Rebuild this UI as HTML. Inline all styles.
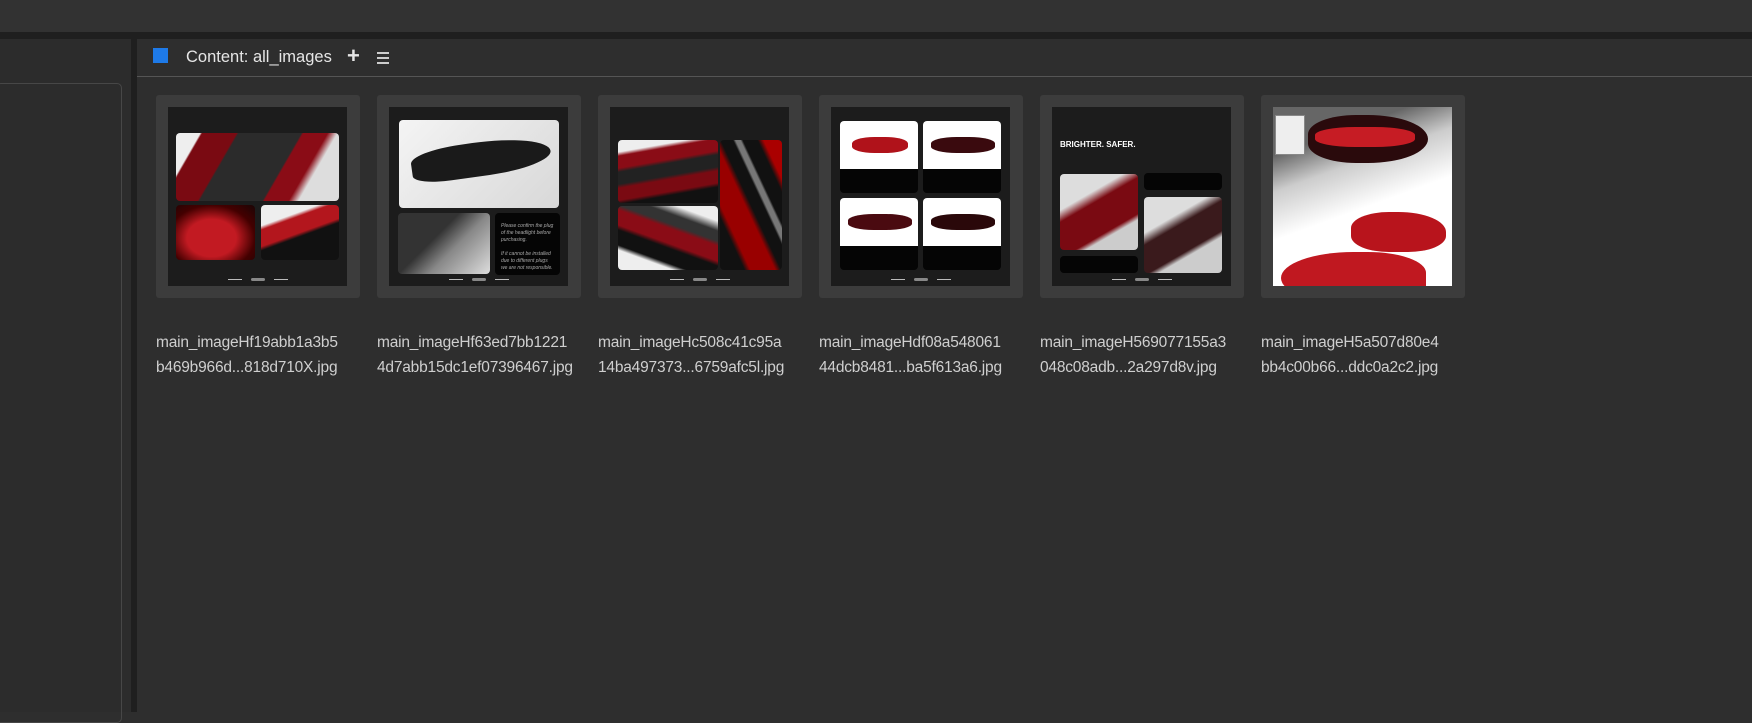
<!DOCTYPE html>
<html><head><meta charset="utf-8">
<style>
*{margin:0;padding:0;box-sizing:border-box}
body{width:1752px;height:712px;background:#2e2e2e;font-family:"Liberation Sans",sans-serif;position:relative;overflow:hidden}
.a{position:absolute}
.tile{position:absolute;top:95px;width:204px;height:203px;background:#3c3c3c;border-radius:3px}
.img{position:absolute;left:12px;top:12px;width:179px;height:179px;background:#1c1c1c;overflow:hidden}
.p{position:absolute;border-radius:4px;overflow:hidden}
.fn{position:absolute;top:330px;width:215px;color:#cfcfcf;font-size:15.5px;line-height:25px;white-space:nowrap;letter-spacing:-0.2px}
.foot{position:absolute;left:60px;top:171px;width:60px;height:4px}
.foot:before{content:"";position:absolute;left:0;top:1px;width:14px;height:1px;background:#bbb;box-shadow:46px 0 0 #bbb}
.foot:after{content:"";position:absolute;left:23px;top:0;width:14px;height:3px;background:#888;border-radius:2px}
.w{background:linear-gradient(135deg,#f4f4f4,#d8d8d8)}
.k{background:#050505}
</style></head><body>
<div class="a" style="left:0;top:0;width:1752px;height:32px;background:#323232"></div>
<div class="a" style="left:0;top:32px;width:1752px;height:7px;background:#1f1f1f"></div>
<div class="a" style="left:0;top:39px;width:131px;height:673px;background:#2c2c2c"></div>
<div class="a" style="left:-4px;top:83px;width:126px;height:640px;border:1px solid #474747;border-radius:5px"></div>
<div class="a" style="left:131px;top:39px;width:6px;height:673px;background:#1f1f1f"></div>
<div class="a" style="left:137px;top:76px;width:1615px;height:1px;background:#555"></div>
<div class="a" style="left:153px;top:48px;width:15px;height:15px;background:#1e7ae8"></div>
<div class="a" style="left:186px;top:47px;color:#e6e6e6;font-size:16.5px;line-height:20px">Content: all_images</div>
<div class="a" style="left:347px;top:44px;color:#e6e6e6;font-size:22px;font-weight:bold;line-height:24px">+</div>
<div class="a" style="left:377px;top:52px;width:12px;height:2px;background:#ccc;box-shadow:0 5px 0 #ccc,0 10px 0 #ccc"></div>

<!-- tile 1 -->
<div class="tile" style="left:156px"><div class="img">
<div class="p" style="left:8px;top:26px;width:163px;height:68px;background:linear-gradient(120deg,#eee 0 12%,#7a0a12 13% 30%,#2b2b2b 31% 62%,#8a0c16 63% 75%,#ddd 80%)"></div>
<div class="p" style="left:8px;top:98px;width:79px;height:55px;background:radial-gradient(ellipse at 45% 60%,#c21a22 0 40%,#400 70%,#1a0505)"></div>
<div class="p" style="left:93px;top:98px;width:78px;height:55px;background:linear-gradient(160deg,#eee 0 25%,#b3161d 30% 50%,#111 55%)"></div>
<div class="foot"></div></div></div>
<div class="fn" style="left:156px">main_imageHf19abb1a3b5<br>b469b966d...818d710X.jpg</div>

<!-- tile 2 -->
<div class="tile" style="left:377px"><div class="img">
<div class="p w" style="left:10px;top:13px;width:160px;height:88px"><div class="a" style="left:12px;top:22px;width:140px;height:34px;background:#1a1a1a;border-radius:40% 60% 50% 30%;transform:rotate(-8deg)"></div></div>
<div class="p" style="left:9px;top:106px;width:92px;height:61px;background:linear-gradient(135deg,#333 0 40%,#888 60%,#ddd)"></div>
<div class="p k" style="left:106px;top:106px;width:65px;height:62px;color:#aaa;font-size:5px;padding:10px 6px;line-height:7px;font-style:italic">Please confirm the plug of the headlight before purchasing.<br><br>If it cannot be installed due to different plugs we are not responsible.</div>
<div class="foot"></div></div></div>
<div class="fn" style="left:377px">main_imageHf63ed7bb1221<br>4d7abb15dc1ef07396467.jpg</div>

<!-- tile 3 -->
<div class="tile" style="left:598px"><div class="img">
<div class="p" style="left:8px;top:33px;width:100px;height:63px;background:linear-gradient(170deg,#eee 0 15%,#8a0c16 20% 35%,#222 40% 55%,#7a0a12 60% 75%,#111 80%)"></div>
<div class="p" style="left:8px;top:99px;width:100px;height:64px;background:linear-gradient(20deg,#eee 0 20%,#111 25% 40%,#8a0c16 45% 60%,#333 65% 75%,#eee 85%)"></div>
<div class="p" style="left:110px;top:33px;width:62px;height:130px;background:linear-gradient(65deg,#111 0 20%,#900 25% 45%,#111 50% 60%,#777 62% 66%,#111 68% 80%,#a00 85%)"></div>
<div class="foot"></div></div></div>
<div class="fn" style="left:598px">main_imageHc508c41c95a<br>14ba497373...6759afc5l.jpg</div>

<!-- tile 4 -->
<div class="tile" style="left:819px"><div class="img">
<div class="p k" style="left:9px;top:14px;width:78px;height:72px"><div class="a w" style="left:0;top:0;width:78px;height:48px;background:#fff"><div class="a" style="left:12px;top:16px;width:56px;height:16px;background:#b0121a;border-radius:40%"></div></div></div>
<div class="p k" style="left:92px;top:14px;width:78px;height:72px"><div class="a" style="left:0;top:0;width:78px;height:48px;background:#fff"><div class="a" style="left:8px;top:16px;width:64px;height:16px;background:#3a0a0e;border-radius:40%"></div></div></div>
<div class="p k" style="left:9px;top:91px;width:78px;height:72px"><div class="a" style="left:0;top:0;width:78px;height:48px;background:#fff"><div class="a" style="left:8px;top:16px;width:64px;height:16px;background:#4a0a10;border-radius:40%"></div></div></div>
<div class="p k" style="left:92px;top:91px;width:78px;height:72px"><div class="a" style="left:0;top:0;width:78px;height:48px;background:#fff"><div class="a" style="left:8px;top:16px;width:64px;height:16px;background:#2a080a;border-radius:40%"></div></div></div>
<div class="foot"></div></div></div>
<div class="fn" style="left:819px">main_imageHdf08a548061<br>44dcb8481...ba5f613a6.jpg</div>

<!-- tile 5 -->
<div class="tile" style="left:1040px"><div class="img">
<div class="a" style="left:8px;top:33px;color:#fff;font-size:8px;font-weight:bold;line-height:9px">BRIGHTER. SAFER.</div>
<div class="p" style="left:8px;top:67px;width:78px;height:76px;background:linear-gradient(150deg,#ddd 0 30%,#7a0a12 40% 70%,#ccc 75%)"></div>
<div class="p k" style="left:92px;top:66px;width:78px;height:17px"></div>
<div class="p" style="left:92px;top:90px;width:78px;height:76px;background:linear-gradient(150deg,#ddd 0 30%,#3a1a1c 40% 65%,#ccc 70%)"></div>
<div class="p k" style="left:8px;top:149px;width:78px;height:17px"></div>
<div class="foot"></div></div></div>
<div class="fn" style="left:1040px">main_imageH569077155a3<br>048c08adb...2a297d8v.jpg</div>

<!-- tile 6 -->
<div class="tile" style="left:1261px"><div class="img" style="background:linear-gradient(160deg,#666 0 20%,#ccc 35%,#fff 55%)">
<div class="a" style="left:35px;top:8px;width:120px;height:48px;background:#2a0a0c;border-radius:40% 50% 50% 40%"></div>
<div class="a" style="left:42px;top:20px;width:100px;height:20px;background:#c61c24;border-radius:40%"></div>
<div class="a" style="left:78px;top:105px;width:95px;height:40px;background:#b8141c;border-radius:40% 50% 40% 40%"></div>
<div class="a" style="left:8px;top:145px;width:145px;height:52px;background:#c01820;border-radius:50% 40% 30% 50%"></div>
<div class="a" style="left:2px;top:8px;width:30px;height:40px;background:#eee;border:1px solid #888"></div>
</div></div>
<div class="fn" style="left:1261px">main_imageH5a507d80e4<br>bb4c00b66...ddc0a2c2.jpg</div>
</body></html>
